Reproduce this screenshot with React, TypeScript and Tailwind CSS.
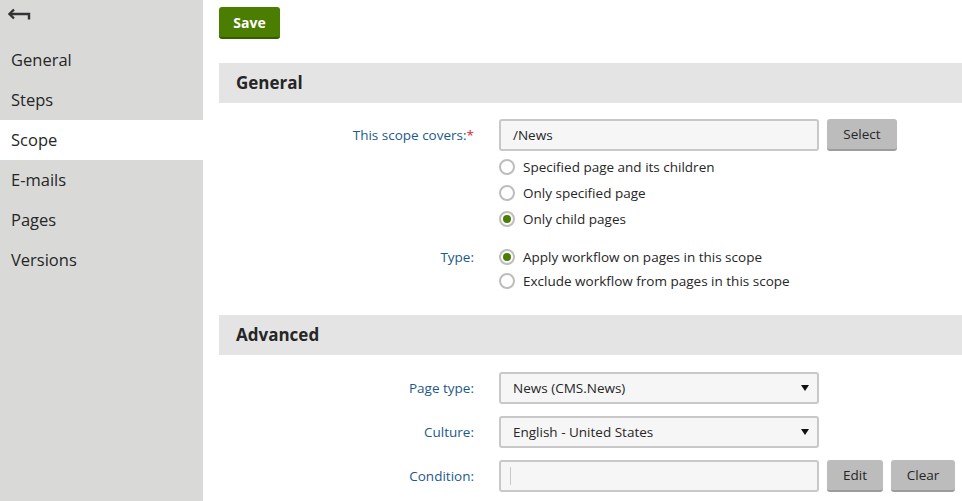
import { useState } from "react";

const NAV = ["General", "Steps", "Scope", "E-mails", "Pages", "Versions"];

function Radio({ checked, label }: { checked?: boolean; label: string }) {
  return (
    <div className="flex items-center gap-2 h-full">
      <span className="w-[16px] h-[16px] rounded-full border-2 border-[#bdbdbd] bg-white flex items-center justify-center shrink-0">
        {checked && <span className="w-[8px] h-[8px] rounded-full bg-[#4a7d00]" />}
      </span>
      <span className="text-[13.5px] text-[#262626]">{label}</span>
    </div>
  );
}

function GrayButton({ children, className = "" }: { children: React.ReactNode; className?: string }) {
  return (
    <button className={"h-[32px] rounded-[3px] bg-[#bcbcbc] border-b-2 border-[#9c9c9c] text-[13.5px] text-[#262626] " + className}>
      {children}
    </button>
  );
}

function SelectBox({ value }: { value: string }) {
  return (
    <div className="w-[320px] h-[32px] rounded-[3px] border-2 border-[#c8c8c8] bg-[#f6f6f6] flex items-center justify-between pl-[12px] pr-[8px]">
      <span className="text-[13.5px] text-[#262626]">{value}</span>
      <svg width="8" height="6" viewBox="0 0 8 6"><path d="M0 0h8L4 6z" fill="#111" /></svg>
    </div>
  );
}

function Label({ children }: { children: React.ReactNode }) {
  return <div className="w-[255px] text-right text-[13.5px] text-[#1b5a8c]">{children}</div>;
}

export default function App() {
  const [active] = useState("Scope");
  return (
    <div className="flex w-[962px] h-[501px] overflow-hidden bg-white" style={{ fontFamily: '"Open Sans", "Noto Sans", sans-serif' }}>
      {/* Sidebar */}
      <div className="w-[203px] shrink-0 bg-[#d9dad8]">
        <div className="h-[40px] flex items-start pl-[8px] pt-[8px]">
          <svg width="24" height="14" viewBox="0 0 24 14" fill="none" stroke="#333" strokeWidth="2.4">
            <path d="M6 1.5L1.5 6L6 10.5" strokeLinejoin="miter" />
            <path d="M2 6H21V11.5" />
          </svg>
        </div>
        {NAV.map((n) => (
          <div
            key={n}
            className={"h-[40px] flex items-center pl-[11px] text-[16.5px] text-[#262626] " + (n === active ? "bg-white" : "")}
          >
            {n}
          </div>
        ))}
      </div>

      {/* Main */}
      <div className="flex-1 pl-[16px]">
        <div className="pt-[7px]">
          <button className="w-[61px] h-[32px] rounded-[3px] bg-[#4a7d00] border-b-2 border-[#365c00] text-white text-[14px] font-bold">
            Save
          </button>
        </div>

        <div className="mt-[24px] h-[40px] bg-[#e4e4e4] flex items-center pl-[17px] text-[17px] font-bold text-[#262626]">
          General
        </div>

        <div className="mt-[16px] flex items-start gap-[25px]">
          <Label>
            <div className="h-[32px] flex items-center justify-end">
              This scope covers:<span className="text-[#d9262c]">*</span>
            </div>
          </Label>
          <div>
            <div className="flex gap-[8px]">
              <div className="w-[320px] h-[32px] rounded-[3px] border-2 border-[#c8c8c8] bg-[#f6f6f6] flex items-center pl-[12px] text-[13.5px] text-[#262626]">
                /News
              </div>
              <GrayButton className="w-[70px]">Select</GrayButton>
            </div>
            <div className="mt-[3px] flex flex-col">
              <div className="h-[26px]"><Radio label="Specified page and its children" /></div>
              <div className="h-[26px]"><Radio label="Only specified page" /></div>
              <div className="h-[26px]"><Radio checked label="Only child pages" /></div>
            </div>
          </div>
        </div>

        <div className="mt-[13px] flex items-start gap-[25px]">
          <Label>
            <div className="h-[24px] flex items-center justify-end">Type:</div>
          </Label>
          <div className="flex flex-col">
            <div className="h-[24px]"><Radio checked label="Apply workflow on pages in this scope" /></div>
            <div className="h-[24px]"><Radio label="Exclude workflow from pages in this scope" /></div>
          </div>
        </div>

        <div className="mt-[22px] h-[40px] bg-[#e4e4e4] flex items-center pl-[17px] text-[17px] font-bold text-[#262626]">
          Advanced
        </div>

        <div className="mt-[17px] flex items-center gap-[25px]">
          <Label>Page type:</Label>
          <SelectBox value="News (CMS.News)" />
        </div>
        <div className="mt-[12px] flex items-center gap-[25px]">
          <Label>Culture:</Label>
          <SelectBox value="English - United States" />
        </div>
        <div className="mt-[12px] flex items-center gap-[25px]">
          <Label>Condition:</Label>
          <div className="flex gap-[8px]">
            <div className="w-[320px] h-[32px] rounded-[3px] border-2 border-[#c8c8c8] bg-[#f6f6f6] flex items-center pl-[9px]">
              <span className="w-px h-[18px] bg-[#c8c8c8]" />
            </div>
            <GrayButton className="w-[56px]">Edit</GrayButton>
            <GrayButton className="w-[64px]">Clear</GrayButton>
          </div>
        </div>
      </div>
    </div>
  );
}
